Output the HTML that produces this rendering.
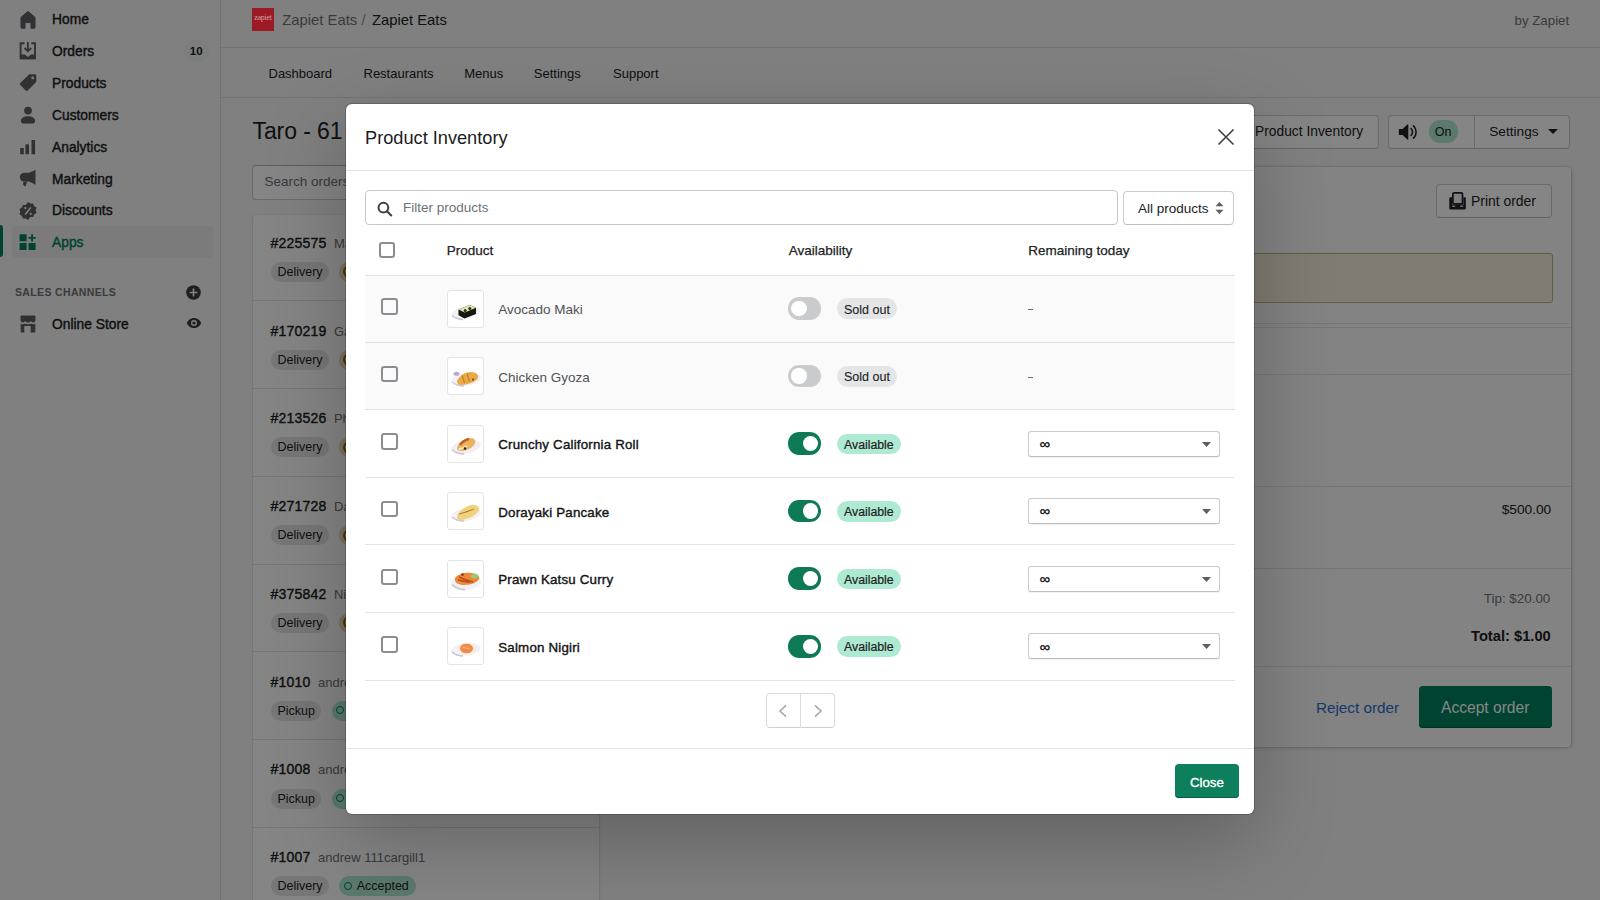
<!DOCTYPE html>
<html><head><meta charset="utf-8">
<style>
html,body{margin:0;padding:0;}
body{width:1600px;height:900px;overflow:hidden;position:relative;font-family:"Liberation Sans",sans-serif;background:#f6f6f7;color:#202223;}
.a{position:absolute;}
.t{position:absolute;white-space:nowrap;line-height:20px;}
.b{font-weight:bold;}
.sb{-webkit-text-stroke:0.3px currentColor;}
.sb2{-webkit-text-stroke:0.4px currentColor;}
svg{position:absolute;overflow:visible;}
</style></head><body>
<!-- SIDEBAR -->
<div class="a" style="left:0;top:0;width:220px;height:900px;background:#f6f6f7;border-right:1px solid #d9dbdd;"></div>
<!-- nav icons -->
<svg style="left:18px;top:9.5px" width="20" height="20" viewBox="0 0 20 20"><path fill="#5c5f62" d="M10 1.2c.3 0 .6.1.8.3l6.2 5.3c.3.3.5.7.5 1.1V17.6c0 .7-.5 1.2-1.2 1.2h-3.2c-.4 0-.6-.3-.6-.6V13.6c0-.4-.3-.7-.7-.7H8.2c-.4 0-.7.3-.7.7v4.6c0 .3-.3.6-.6.6H3.7c-.7 0-1.2-.5-1.2-1.2V7.9c0-.4.2-.8.5-1.1l6.2-5.3c.2-.2.5-.3.8-.3z"/></svg>
<svg style="left:18px;top:41.4px" width="20" height="20" viewBox="0 0 20 20"><path fill="none" stroke="#5c5f62" stroke-width="1.9" d="M6.5 2.3H2.6V17.3H17V2.3H13.3"/><path fill="none" stroke="#5c5f62" stroke-width="1.8" d="M9.9 1v9.2M6.6 7l3.3 3.3L13.2 7"/><path fill="#5c5f62" d="M2.6 13.4h4.3l3 2.6 3-2.6H17v4.9H2.6z"/></svg>
<svg style="left:18px;top:73.2px" width="20" height="20" viewBox="0 0 20 20"><path fill="#5c5f62" d="M11.3 1.3h5.6c.8 0 1.4.6 1.4 1.4v5.6c0 .4-.2.7-.4 1l-8.2 8.2c-.6.6-1.4.6-2 0L2.3 12.1c-.6-.6-.6-1.4 0-2l8.2-8.2c.2-.3.6-.6.8-.6z"/><circle cx="14.7" cy="4.9" r="1.4" fill="#f6f6f7"/></svg>
<svg style="left:18px;top:105px" width="20" height="20" viewBox="0 0 20 20"><circle cx="10" cy="5.6" r="3.9" fill="#5c5f62"/><path fill="#5c5f62" d="M10 11.3c4.3 0 7.1 2 7.1 4.5 0 1.5-.9 2.7-2.2 2.7H5.1c-1.3 0-2.2-1.2-2.2-2.7 0-2.5 2.8-4.5 7.1-4.5z"/></svg>
<svg style="left:18px;top:137px" width="20" height="20" viewBox="0 0 20 20"><rect x="2.2" y="11" width="3.6" height="6.3" rx=".6" fill="#5c5f62"/><rect x="7.4" y="7.2" width="3.6" height="10.1" rx=".6" fill="#5c5f62"/><rect x="13.5" y="3" width="3.6" height="14.3" rx=".6" fill="#5c5f62"/></svg>
<svg style="left:18px;top:168.8px" width="20" height="20" viewBox="0 0 20 20"><path fill="#5c5f62" d="M17.5 1v14.8L11 12.6H6.5C4 12.6 1.8 11 1.8 8.2S4 3.7 6.5 3.7H11z"/><path fill="#5c5f62" d="M5.5 12.4h3.6l-1.2 4.2c-.2.6-1 .8-1.4.3L5 15.4z"/></svg>
<svg style="left:18px;top:200.5px" width="20" height="20" viewBox="0 0 20 20"><path fill="#5c5f62" d="M10 .9l2.3 1.6 2.8-.1 1 2.6 2.4 1.5-.8 2.7.8 2.7-2.4 1.5-1 2.6-2.8-.1L10 19.1l-2.3-1.6-2.8.1-1-2.6-2.4-1.5.8-2.7-.8-2.7 2.4-1.5 1-2.6 2.8.1z"/><path stroke="#f6f6f7" stroke-width="1.5" d="M12.8 6.6L7.2 13.4"/><circle cx="7.3" cy="7.1" r="1.1" fill="#f6f6f7"/><circle cx="12.7" cy="12.9" r="1.1" fill="#f6f6f7"/></svg>
<div class="a" style="left:0;top:224.5px;width:3px;height:32px;background:#008060;border-radius:0 3px 3px 0;"></div>
<div class="a" style="left:12px;top:226px;width:201px;height:32px;background:#ebeced;border-radius:4px;"></div>
<svg style="left:18px;top:232.5px" width="20" height="20" viewBox="0 0 20 20"><rect x="1.6" y="1.3" width="7" height="7" rx=".6" fill="#008060"/><rect x="1.6" y="10" width="7" height="7" rx=".6" fill="#008060"/><rect x="10.6" y="10" width="7" height="7" rx=".6" fill="#008060"/><path stroke="#008060" stroke-width="1.8" d="M14.1 1.2v7.2M10.5 4.8h7.2"/></svg>
<!-- nav texts -->
<div class="t sb2" style="left:52px;top:10px;font-size:13.8px;">Home</div>
<div class="t sb2" style="left:52px;top:42px;font-size:13.8px;">Orders</div>
<div class="t sb2" style="left:52px;top:74px;font-size:13.8px;">Products</div>
<div class="t sb2" style="left:52px;top:106px;font-size:13.8px;">Customers</div>
<div class="t sb2" style="left:52px;top:138px;font-size:13.8px;">Analytics</div>
<div class="t sb2" style="left:52px;top:170px;font-size:13.8px;">Marketing</div>
<div class="t sb2" style="left:52px;top:201px;font-size:13.8px;">Discounts</div>
<div class="t sb2" style="left:52px;top:233px;font-size:13.8px;color:#007f5f;">Apps</div>
<div class="a" style="left:184px;top:40px;width:24.5px;height:22px;border-radius:11px;background:#eeeff0;"></div>
<div class="t b" style="left:184px;top:41px;width:24.5px;text-align:center;font-size:11.5px;">10</div>
<div class="t b" style="left:15px;top:282px;font-size:10.5px;color:#6d7175;letter-spacing:0.35px;">SALES CHANNELS</div>
<svg style="left:186px;top:284.5px" width="15" height="15" viewBox="0 0 15 15"><circle cx="7.5" cy="7.5" r="7.3" fill="#3a3c3e"/><path stroke="#f6f6f7" stroke-width="1.7" d="M7.5 3.6v7.8M3.6 7.5h7.8"/></svg>
<svg style="left:18px;top:314px" width="20" height="20" viewBox="0 0 20 20"><path fill="#5c5f62" d="M3.8 1.5h12.4c.8 0 1.3.5 1.3 1.3V6c0 1.3-1 2.5-2.4 2.5-1 0-1.8-.6-2.2-1.4-.4.8-1.2 1.4-2.2 1.4H9.3c-1 0-1.8-.6-2.2-1.4-.4.8-1.2 1.4-2.2 1.4C3.5 8.5 2.5 7.3 2.5 6V2.8c0-.8.5-1.3 1.3-1.3z"/><path fill="#5c5f62" d="M2.7 9.8c.6.3 1.3.5 2 .5.9 0 1.7-.3 2.3-.8.6.5 1.4.8 2.3.8h1.4c.9 0 1.7-.3 2.3-.8.6.5 1.4.8 2.3.8.7 0 1.4-.2 2-.5v8.8H12.7V12H6.3v6.6H2.7z"/></svg>
<div class="t sb2" style="left:52px;top:315px;font-size:13.8px;">Online Store</div>
<svg style="left:185.5px;top:315px" width="16" height="16" viewBox="0 0 16 16"><path fill="#3a3c3e" d="M8 2.9c3.5 0 6.2 2.5 7.2 5.1-1 2.6-3.7 5.1-7.2 5.1S1.8 10.6.8 8C1.8 5.4 4.5 2.9 8 2.9z"/><circle cx="8" cy="8" r="3" fill="#f6f6f7"/><circle cx="8" cy="8" r="1.6" fill="#3a3c3e"/></svg>

<!-- TOPBAR -->
<div class="a" style="left:221px;top:0;width:1379px;height:47px;background:#f6f6f7;border-bottom:1px solid #dcdee0;"></div>
<div class="a" style="left:221px;top:48px;width:1379px;height:49px;background:#f6f6f7;border-bottom:1px solid #dcdee0;"></div>
<div class="t" style="left:282.3px;top:10px;font-size:14.8px;color:#6d7175;">Zapiet Eats</div>
<div class="t" style="left:361.5px;top:10px;font-size:14.8px;color:#8c9196;">/</div>
<div class="t" style="left:372px;top:10px;font-size:14.8px;color:#202223;">Zapiet Eats</div>
<div class="t" style="left:1514.5px;top:11px;font-size:13.3px;color:#6d7175;">by Zapiet</div>
<div class="t" style="left:268.5px;top:64px;font-size:13px;">Dashboard</div>
<div class="t" style="left:363.5px;top:64px;font-size:13px;">Restaurants</div>
<div class="t" style="left:464.2px;top:64px;font-size:13px;">Menus</div>
<div class="t" style="left:533.8px;top:64px;font-size:13px;">Settings</div>
<div class="t" style="left:613px;top:64px;font-size:13px;">Support</div>

<!-- PAGE -->
<div class="t" style="left:252.5px;top:121px;font-size:23px;letter-spacing:-0.1px;">Taro - 61 Main St</div>
<!-- header buttons -->
<div class="a" style="left:1150px;top:114.5px;width:227px;height:32px;background:#fff;border:1px solid #c9cccf;border-bottom-color:#babfc3;border-radius:4px;"></div>
<div class="t" style="left:1255px;top:122px;font-size:13.8px;">Product Inventory</div>
<div class="a" style="left:1387.5px;top:114.5px;width:180.5px;height:32px;background:#fff;border:1px solid #c9cccf;border-bottom-color:#babfc3;border-radius:4px;"></div>
<div class="a" style="left:1474px;top:115.5px;width:1px;height:32px;background:#c9cccf;"></div>
<svg style="left:1398px;top:121.5px" width="20" height="20" viewBox="0 0 20 20"><path fill="#202223" d="M1.5 7h3.2l4.6-4.6c.4-.4 1-.1 1 .4v14.4c0 .5-.6.8-1 .4L4.7 13H1.5c-.4 0-.7-.3-.7-.7V7.7c0-.4.3-.7.7-.7z"/><path fill="none" stroke="#202223" stroke-width="1.6" stroke-linecap="round" d="M13 6.5c1 .9 1.5 2.1 1.5 3.5s-.5 2.6-1.5 3.5M15.5 3.8c1.7 1.6 2.6 3.8 2.6 6.2s-.9 4.6-2.6 6.2"/></svg>
<div class="a" style="left:1428.5px;top:120px;width:29px;height:22.5px;border-radius:11px;background:#aee9d1;"></div>
<div class="t" style="left:1428.5px;top:121.5px;width:29px;text-align:center;font-size:12.5px;">On</div>
<div class="t" style="left:1489.2px;top:122px;font-size:13.7px;">Settings</div>
<svg style="left:1548px;top:129.4px" width="10" height="5" viewBox="0 0 10 5"><path fill="#202223" d="M0 0h10L5 5z"/></svg>
<!-- search orders -->
<div class="a" style="left:252px;top:164.5px;width:345px;height:33px;background:#fff;border:1px solid #c9cccf;border-top-color:#aeb4b9;border-radius:4px;"></div>
<div class="t" style="left:264.4px;top:172px;font-size:13.5px;color:#6d7175;">Search orders</div>
<!-- list card -->
<div class="a" style="left:252.5px;top:214.5px;width:346.5px;height:700px;background:#fff;box-shadow:0 0 0 1px rgba(63,63,68,.05),0 1px 3px rgba(63,63,68,.15);border-radius:3px;"></div>
<div class="t" style="left:270.5px;top:233.0px;font-size:14px;letter-spacing:0.2px;-webkit-text-stroke:0.4px #202223;">#225575<span style="-webkit-text-stroke:0;letter-spacing:0;color:#6d7175;margin-left:7.5px;font-size:13px;">Maria Silva</span></div>
<div class="a" style="left:271.3px;top:261.7px;width:57.4px;height:20px;border-radius:10px;background:#e4e5e7;"></div>
<div class="t" style="left:271.3px;top:261.7px;width:57.4px;text-align:center;font-size:12.5px;">Delivery</div>
<div class="a" style="left:339.2px;top:261.7px;width:90px;height:20px;border-radius:10px;background:#ead9b0;"></div>
<div class="a" style="left:343.2px;top:265.2px;width:9px;height:9px;border-radius:50%;border:2px solid #916a1a;"></div>
<div class="a" style="left:252px;top:300.2px;width:347px;height:1px;background:#e1e3e5;"></div>
<div class="t" style="left:270.5px;top:321.0px;font-size:14px;letter-spacing:0.2px;-webkit-text-stroke:0.4px #202223;">#170219<span style="-webkit-text-stroke:0;letter-spacing:0;color:#6d7175;margin-left:7.5px;font-size:13px;">Gary Lee</span></div>
<div class="a" style="left:271.3px;top:349.5px;width:57.4px;height:20px;border-radius:10px;background:#e4e5e7;"></div>
<div class="t" style="left:271.3px;top:349.5px;width:57.4px;text-align:center;font-size:12.5px;">Delivery</div>
<div class="a" style="left:339.2px;top:349.5px;width:90px;height:20px;border-radius:10px;background:#ead9b0;"></div>
<div class="a" style="left:343.2px;top:353.0px;width:9px;height:9px;border-radius:50%;border:2px solid #916a1a;"></div>
<div class="a" style="left:252px;top:388.0px;width:347px;height:1px;background:#e1e3e5;"></div>
<div class="t" style="left:270.5px;top:408.0px;font-size:14px;letter-spacing:0.2px;-webkit-text-stroke:0.4px #202223;">#213526<span style="-webkit-text-stroke:0;letter-spacing:0;color:#6d7175;margin-left:7.5px;font-size:13px;">Phil Moss</span></div>
<div class="a" style="left:271.3px;top:437.3px;width:57.4px;height:20px;border-radius:10px;background:#e4e5e7;"></div>
<div class="t" style="left:271.3px;top:437.3px;width:57.4px;text-align:center;font-size:12.5px;">Delivery</div>
<div class="a" style="left:339.2px;top:437.3px;width:90px;height:20px;border-radius:10px;background:#ead9b0;"></div>
<div class="a" style="left:343.2px;top:440.8px;width:9px;height:9px;border-radius:50%;border:2px solid #916a1a;"></div>
<div class="a" style="left:252px;top:475.8px;width:347px;height:1px;background:#e1e3e5;"></div>
<div class="t" style="left:270.5px;top:496.0px;font-size:14px;letter-spacing:0.2px;-webkit-text-stroke:0.4px #202223;">#271728<span style="-webkit-text-stroke:0;letter-spacing:0;color:#6d7175;margin-left:7.5px;font-size:13px;">Dana Fox</span></div>
<div class="a" style="left:271.3px;top:525.1px;width:57.4px;height:20px;border-radius:10px;background:#e4e5e7;"></div>
<div class="t" style="left:271.3px;top:525.1px;width:57.4px;text-align:center;font-size:12.5px;">Delivery</div>
<div class="a" style="left:339.2px;top:525.1px;width:90px;height:20px;border-radius:10px;background:#ead9b0;"></div>
<div class="a" style="left:343.2px;top:528.6px;width:9px;height:9px;border-radius:50%;border:2px solid #916a1a;"></div>
<div class="a" style="left:252px;top:563.6px;width:347px;height:1px;background:#e1e3e5;"></div>
<div class="t" style="left:270.5px;top:584.0px;font-size:14px;letter-spacing:0.2px;-webkit-text-stroke:0.4px #202223;">#375842<span style="-webkit-text-stroke:0;letter-spacing:0;color:#6d7175;margin-left:7.5px;font-size:13px;">Nina Park</span></div>
<div class="a" style="left:271.3px;top:612.9px;width:57.4px;height:20px;border-radius:10px;background:#e4e5e7;"></div>
<div class="t" style="left:271.3px;top:612.9px;width:57.4px;text-align:center;font-size:12.5px;">Delivery</div>
<div class="a" style="left:339.2px;top:612.9px;width:90px;height:20px;border-radius:10px;background:#ead9b0;"></div>
<div class="a" style="left:343.2px;top:616.4px;width:9px;height:9px;border-radius:50%;border:2px solid #916a1a;"></div>
<div class="a" style="left:252px;top:651.4px;width:347px;height:1px;background:#e1e3e5;"></div>
<div class="t" style="left:270.5px;top:672.0px;font-size:14px;letter-spacing:0.2px;-webkit-text-stroke:0.4px #202223;">#1010<span style="-webkit-text-stroke:0;letter-spacing:0;color:#6d7175;margin-left:7.5px;font-size:13px;">andrew 111cargill1</span></div>
<div class="a" style="left:271.3px;top:700.7px;width:49.8px;height:20px;border-radius:10px;background:#e4e5e7;"></div>
<div class="t" style="left:271.3px;top:700.7px;width:49.8px;text-align:center;font-size:12.5px;">Pickup</div>
<div class="a" style="left:331.6px;top:700.7px;width:77px;height:20px;border-radius:10px;background:#aee9d1;"></div>
<div class="a" style="left:335.9px;top:705.9px;width:6px;height:6px;border-radius:50%;border:1.8px solid #007f5f;"></div>
<div class="t" style="left:349.1px;top:700.7px;font-size:12.5px;">Accepted</div>
<div class="a" style="left:252px;top:739.2px;width:347px;height:1px;background:#e1e3e5;"></div>
<div class="t" style="left:270.5px;top:759.0px;font-size:14px;letter-spacing:0.2px;-webkit-text-stroke:0.4px #202223;">#1008<span style="-webkit-text-stroke:0;letter-spacing:0;color:#6d7175;margin-left:7.5px;font-size:13px;">andrew 111cargill1</span></div>
<div class="a" style="left:271.3px;top:788.5px;width:49.8px;height:20px;border-radius:10px;background:#e4e5e7;"></div>
<div class="t" style="left:271.3px;top:788.5px;width:49.8px;text-align:center;font-size:12.5px;">Pickup</div>
<div class="a" style="left:331.6px;top:788.5px;width:77px;height:20px;border-radius:10px;background:#aee9d1;"></div>
<div class="a" style="left:335.9px;top:793.7px;width:6px;height:6px;border-radius:50%;border:1.8px solid #007f5f;"></div>
<div class="t" style="left:349.1px;top:788.5px;font-size:12.5px;">Accepted</div>
<div class="a" style="left:252px;top:827.0px;width:347px;height:1px;background:#e1e3e5;"></div>
<div class="t" style="left:270.5px;top:847.0px;font-size:14px;letter-spacing:0.2px;-webkit-text-stroke:0.4px #202223;">#1007<span style="-webkit-text-stroke:0;letter-spacing:0;color:#6d7175;margin-left:7.5px;font-size:13px;">andrew 111cargill1</span></div>
<div class="a" style="left:271.3px;top:876.3px;width:57.4px;height:20px;border-radius:10px;background:#e4e5e7;"></div>
<div class="t" style="left:271.3px;top:876.3px;width:57.4px;text-align:center;font-size:12.5px;">Delivery</div>
<div class="a" style="left:339.2px;top:876.3px;width:77px;height:20px;border-radius:10px;background:#aee9d1;"></div>
<div class="a" style="left:343.5px;top:881.5px;width:6px;height:6px;border-radius:50%;border:1.8px solid #007f5f;"></div>
<div class="t" style="left:356.7px;top:876.3px;font-size:12.5px;">Accepted</div>

<!-- detail card -->
<div class="a" style="left:615px;top:166.5px;width:955.5px;height:580.5px;background:#fbfbfb;box-shadow:0 0 0 1px rgba(63,63,68,.08),1px 1px 4px rgba(63,63,68,.22);border-radius:4px;"></div>
<div class="a" style="left:1436px;top:183.7px;width:113.7px;height:32.6px;background:#fff;border:1px solid #c9cccf;border-bottom-color:#babfc3;border-radius:4px;"></div>
<svg style="left:1440px;top:185px" width="40" height="30" viewBox="0 0 40 30"><rect x="12.9" y="7.9" width="9.6" height="11" rx="1.2" fill="#f4f4f4" stroke="#202223" stroke-width="1.7"/><path fill="#202223" d="M9.3 13.2c0-.5.4-.9.9-.9H12V19.6h11.4V12.3h1.5c.5 0 .9.4.9.9v10.3c0 .5-.4.9-.9.9H10.2c-.5 0-.9-.4-.9-.9z"/><rect x="12.2" y="20.6" width="3" height="1.3" fill="#e8e8e8"/><rect x="20.2" y="20.6" width="3" height="1.3" fill="#e8e8e8"/></svg>
<div class="t" style="left:1471px;top:191px;font-size:13.9px;">Print order</div>
<div class="a" style="left:630px;top:252.7px;width:920.7px;height:48.7px;background:#f6eedb;border:1px solid #bfb084;border-radius:3px;"></div>
<div class="a" style="left:615px;top:323px;width:953px;height:1px;background:#e1e3e5;"></div>
<div class="a" style="left:615px;top:326.5px;width:955.5px;height:1px;background:#e1e3e5;"></div>
<div class="a" style="left:615px;top:373.5px;width:955.5px;height:1px;background:#e1e3e5;"></div>
<div class="a" style="left:615px;top:486px;width:955.5px;height:1px;background:#e1e3e5;"></div>
<div class="t" style="left:1501.7px;top:500px;font-size:13.7px;">$500.00</div>
<div class="a" style="left:615px;top:568px;width:955.5px;height:1px;background:#e1e3e5;"></div>
<div class="t" style="left:1483.8px;top:589px;font-size:13.4px;color:#6d7175;">Tip: $20.00</div>
<div class="t b" style="left:1471px;top:626px;font-size:14.7px;">Total: $1.00</div>
<div class="a" style="left:615px;top:666px;width:955.5px;height:1px;background:#e1e3e5;"></div>
<div class="t" style="left:1315.9px;top:698px;font-size:15.3px;color:#2c6ecb;">Reject order</div>
<div class="a" style="left:1418.6px;top:686.1px;width:133.4px;height:42.2px;background:#008060;border-radius:4px;box-shadow:inset 0 -1px 0 #005e46;"></div>
<div class="t" style="left:1441px;top:698px;font-size:15.6px;color:#fff;">Accept order</div>

<!-- OVERLAY -->
<div class="a" style="left:0;top:0;width:1600px;height:900px;background:rgba(0,0,0,0.48);"></div>
<div class="a" style="left:252px;top:8px;width:22px;height:23px;background:#9b1a24;"></div>
<div class="t" style="left:252px;top:8px;width:22px;text-align:center;font-size:8px;letter-spacing:-0.3px;color:#d9a0a5;font-family:'Liberation Serif',serif;">zapiet</div>
<!-- MODAL -->
<div class="a" style="left:346px;top:104px;width:908px;height:710px;background:#fff;border-radius:6px;box-shadow:0 0 0 1px rgba(0,0,0,.18),0 26px 80px rgba(0,0,0,.25);"></div>
<svg width="0" height="0" style="position:absolute"><defs><filter id="bl" x="-10%" y="-10%" width="120%" height="120%"><feGaussianBlur stdDeviation="0.35"/></filter></defs></svg>
<div class="t" style="left:365px;top:128.4px;font-size:18.2px;color:#1a1c1d;">Product Inventory</div>
<svg style="left:1216px;top:127px" width="20" height="20" viewBox="0 0 20 20"><path stroke="#3d3f41" stroke-width="1.6" d="M2.5 2.5l15 15M17.5 2.5l-15 15"/></svg>
<div class="a" style="left:346px;top:170px;width:908px;height:1px;background:#e1e3e5;"></div>
<div class="a" style="left:365px;top:190px;width:750.5px;height:33px;background:#fff;border:1px solid #c4c7ca;border-radius:4px;"></div>
<svg style="left:376px;top:199.5px" width="18" height="18" viewBox="0 0 18 18"><circle cx="7.4" cy="7.6" r="4.9" fill="none" stroke="#3f4245" stroke-width="2"/><path stroke="#3f4245" stroke-width="2.1" stroke-linecap="round" d="M11 11.3l4.2 4.1"/></svg>
<div class="t" style="left:403px;top:198px;font-size:13.5px;color:#6d7175;">Filter products</div>
<div class="a" style="left:1122.7px;top:190.5px;width:109.7px;height:32.2px;background:#fff;border:1px solid #c9cccf;border-bottom-color:#babfc3;border-radius:4px;"></div>
<div class="t" style="left:1138px;top:199px;font-size:13.5px;">All products</div>
<svg style="left:1214.5px;top:202px" width="9" height="12" viewBox="0 0 9 12"><path fill="#5c5f62" d="M4.5 0L8.5 4.2H.5zM4.5 12L.5 7.8h8z"/></svg>
<div style="position:absolute;box-sizing:border-box;width:16.5px;height:16.5px;border:2px solid #8a8e93;border-radius:3px;left:378.8px;top:241.6px;"></div>
<div class="t" style="left:446.7px;top:241px;font-size:13.5px;-webkit-text-stroke:0.25px #202223;">Product</div>
<div class="t" style="left:788.7px;top:241px;font-size:13.5px;-webkit-text-stroke:0.25px #202223;">Availability</div>
<div class="t" style="left:1028.3px;top:241px;font-size:13.5px;-webkit-text-stroke:0.25px #202223;">Remaining today</div>
<div class="a" style="left:365px;top:274.5px;width:870px;height:1px;background:#e1e3e5;"></div>
<div class="a" style="left:365px;top:275.5px;width:870px;height:66.3px;background:#fafafa;"></div>
<div class="a" style="left:365px;top:341.8px;width:870px;height:1px;background:#e1e3e5;"></div>
<div style="position:absolute;box-sizing:border-box;width:16.5px;height:16.5px;border:2px solid #8a8e93;border-radius:3px;left:381px;top:298.3px;"></div>
<div class="a" style="left:446.5px;top:289.5px;width:35.5px;height:36px;background:#fff;border:1px solid #e3e4e6;border-radius:3px;"></div>
<svg style="left:446.5px;top:289.5px" width="37.5" height="38" viewBox="0 0 37.5 38"><g filter="url(#bl)"><ellipse cx="19" cy="22.5" rx="14.5" ry="6.2" fill="#f1f0f4" transform="rotate(-10 19 22.5)"/><path d="M5 25.5c3 2.5 7 4 11 4" stroke="#c8c6d6" stroke-width="1.6" fill="none"/><path d="M11.5 19.5l11-4.5 6.5 2.8v6.2L17.5 28.5l-6-3.2z" fill="#121410"/><path d="M11.5 19.5l11-4.5 6.5 2.8-11.2 4.7z" fill="#e4e6b4"/><circle cx="18.2" cy="20.4" r="1.5" fill="#2b3315"/><circle cx="22.8" cy="18.4" r="1.5" fill="#2b3315"/></g></svg>
<div class="t" style="left:498.3px;top:300px;font-size:13.5px;color:#505356;">Avocado Maki</div>
<div class="a" style="left:788.3px;top:297.2px;width:33px;height:22.6px;border-radius:11.3px;background:#c9cbcd;"></div>
<div class="a" style="left:791.4px;top:300.8px;width:15.4px;height:15.4px;border-radius:50%;background:#fff;"></div>
<div class="a" style="left:836.6px;top:298.4px;width:60.5px;height:20.8px;border-radius:10.4px;background:#e4e5e7;"></div>
<div class="t" style="left:844px;top:300px;font-size:12.5px;-webkit-text-stroke:0.1px #202223;">Sold out</div>
<div class="a" style="left:1028.3px;top:309.2px;width:4.8px;height:1.3px;background:#6d7175;"></div>
<div class="a" style="left:365px;top:343.1px;width:870px;height:66.3px;background:#fafafa;"></div>
<div class="a" style="left:365px;top:409.4px;width:870px;height:1px;background:#e1e3e5;"></div>
<div style="position:absolute;box-sizing:border-box;width:16.5px;height:16.5px;border:2px solid #8a8e93;border-radius:3px;left:381px;top:365.9px;"></div>
<div class="a" style="left:446.5px;top:357.1px;width:35.5px;height:36px;background:#fff;border:1px solid #e3e4e6;border-radius:3px;"></div>
<svg style="left:446.5px;top:357.1px" width="37.5" height="38" viewBox="0 0 37.5 38"><g filter="url(#bl)"><ellipse cx="19" cy="22.5" rx="15" ry="6.5" fill="#f3f1f5" transform="rotate(-8 19 22.5)"/><path d="M5 25c3 2.5 8 4 12 4" stroke="#cfcbd9" stroke-width="1.5" fill="none"/><ellipse cx="9.5" cy="16.8" rx="3" ry="2" fill="#b9a8cf"/><path d="M10 24c2-5 8-9 14-9 5 0 8 3 7 6-2 4-11 7-17 7-3 0-4-2-4-4z" fill="#e7aa45"/><path d="M15 18l2.5 8M20 16.5l2.5 8" stroke="#c27d22" stroke-width="1.1"/><circle cx="26" cy="22.5" r="1" fill="#6b3a12"/></g></svg>
<div class="t" style="left:498.3px;top:368px;font-size:13.5px;color:#505356;">Chicken Gyoza</div>
<div class="a" style="left:788.3px;top:364.8px;width:33px;height:22.6px;border-radius:11.3px;background:#c9cbcd;"></div>
<div class="a" style="left:791.4px;top:368.4px;width:15.4px;height:15.4px;border-radius:50%;background:#fff;"></div>
<div class="a" style="left:836.6px;top:365.9px;width:60.5px;height:20.8px;border-radius:10.4px;background:#e4e5e7;"></div>
<div class="t" style="left:844px;top:367px;font-size:12.5px;-webkit-text-stroke:0.1px #202223;">Sold out</div>
<div class="a" style="left:1028.3px;top:376.8px;width:4.8px;height:1.3px;background:#6d7175;"></div>
<div class="a" style="left:365px;top:476.9px;width:870px;height:1px;background:#e1e3e5;"></div>
<div style="position:absolute;box-sizing:border-box;width:16.5px;height:16.5px;border:2px solid #8a8e93;border-radius:3px;left:381px;top:433.4px;"></div>
<div class="a" style="left:446.5px;top:424.6px;width:35.5px;height:36px;background:#fff;border:1px solid #e3e4e6;border-radius:3px;"></div>
<svg style="left:446.5px;top:424.6px" width="37.5" height="38" viewBox="0 0 37.5 38"><g filter="url(#bl)"><ellipse cx="19" cy="22" rx="15" ry="6.8" fill="#f1eef5" transform="rotate(-12 19 22)"/><path d="M5 24.5c3 2.5 8 4.5 12 4.5" stroke="#c9c3d8" stroke-width="1.6" fill="none"/><path d="M10 23c1-5 6-9 12-10 4-.5 7 1 6 5-1 4-7 7-12 8-4 .5-6-1-6-3z" fill="#eab25e"/><path d="M13 20c2-3 5-5 9-6" stroke="#c4621c" stroke-width="2.4"/><path d="M12 24c3 0 5-1 8-3" stroke="#f4ecc8" stroke-width="2"/><circle cx="18" cy="23.5" r="1.3" fill="#2a1a0a"/></g></svg>
<div class="t" style="left:498.3px;top:435px;font-size:13.3px;letter-spacing:0.2px;-webkit-text-stroke:0.4px #141516;color:#141516;">Crunchy California Roll</div>
<div class="a" style="left:788.3px;top:432.3px;width:33px;height:22.6px;border-radius:11.3px;background:#0e7a55;"></div>
<div class="a" style="left:802.6px;top:435.9px;width:15.4px;height:15.4px;border-radius:50%;background:#fff;"></div>
<div class="a" style="left:836.6px;top:433.5px;width:64.2px;height:20.8px;border-radius:10.4px;background:#aee9d1;"></div>
<div class="t" style="left:844px;top:435px;font-size:12.3px;-webkit-text-stroke:0.2px #202223;">Available</div>
<div class="a" style="left:1028.4px;top:430.5px;width:189.2px;height:24.2px;background:#fff;border:1px solid #c9cccf;border-bottom-color:#babfc3;border-radius:3px;box-shadow:0 1px 0 rgba(0,0,0,.05);"></div>
<div class="t b" style="left:1039.5px;top:433.8px;font-size:15px;">&#8734;</div>
<svg style="left:1202.3px;top:441.7px" width="9" height="5" viewBox="0 0 9 5"><path fill="#5c5f62" d="M0 0h9L4.5 5z"/></svg>
<div class="a" style="left:365px;top:544.4px;width:870px;height:1px;background:#e1e3e5;"></div>
<div style="position:absolute;box-sizing:border-box;width:16.5px;height:16.5px;border:2px solid #8a8e93;border-radius:3px;left:381px;top:500.9px;"></div>
<div class="a" style="left:446.5px;top:492.1px;width:35.5px;height:36px;background:#fff;border:1px solid #e3e4e6;border-radius:3px;"></div>
<svg style="left:446.5px;top:492.1px" width="37.5" height="38" viewBox="0 0 37.5 38"><g filter="url(#bl)"><ellipse cx="19" cy="22.5" rx="15" ry="6.5" fill="#f2eff5" transform="rotate(-10 19 22.5)"/><path d="M5 25c3 2.5 8 4 12 4" stroke="#cdc8da" stroke-width="1.5" fill="none"/><path d="M10 25c1-5 7-10 14-12 5-1 9 2 8 5-1 4-10 9-17 10-3 .5-5-1-5-3z" fill="#f1d27c"/><path d="M12 22c5-1 10-3 15-5" stroke="#b98a3c" stroke-width="1.3"/></g></svg>
<div class="t" style="left:498.3px;top:503px;font-size:13.3px;letter-spacing:0.2px;-webkit-text-stroke:0.4px #141516;color:#141516;">Dorayaki Pancake</div>
<div class="a" style="left:788.3px;top:499.8px;width:33px;height:22.6px;border-radius:11.3px;background:#0e7a55;"></div>
<div class="a" style="left:802.6px;top:503.4px;width:15.4px;height:15.4px;border-radius:50%;background:#fff;"></div>
<div class="a" style="left:836.6px;top:501.0px;width:64.2px;height:20.8px;border-radius:10.4px;background:#aee9d1;"></div>
<div class="t" style="left:844px;top:502px;font-size:12.3px;-webkit-text-stroke:0.2px #202223;">Available</div>
<div class="a" style="left:1028.4px;top:498.0px;width:189.2px;height:24.2px;background:#fff;border:1px solid #c9cccf;border-bottom-color:#babfc3;border-radius:3px;box-shadow:0 1px 0 rgba(0,0,0,.05);"></div>
<div class="t b" style="left:1039.5px;top:501.3px;font-size:15px;">&#8734;</div>
<svg style="left:1202.3px;top:509.2px" width="9" height="5" viewBox="0 0 9 5"><path fill="#5c5f62" d="M0 0h9L4.5 5z"/></svg>
<div class="a" style="left:365px;top:612.0px;width:870px;height:1px;background:#e1e3e5;"></div>
<div style="position:absolute;box-sizing:border-box;width:16.5px;height:16.5px;border:2px solid #8a8e93;border-radius:3px;left:381px;top:568.5px;"></div>
<div class="a" style="left:446.5px;top:559.7px;width:35.5px;height:36px;background:#fff;border:1px solid #e3e4e6;border-radius:3px;"></div>
<svg style="left:446.5px;top:559.7px" width="37.5" height="38" viewBox="0 0 37.5 38"><g filter="url(#bl)"><ellipse cx="19" cy="22.5" rx="15" ry="7.5" fill="#f1f1f3" transform="rotate(-6 19 22.5)"/><path d="M5 24.5c3 3 8 5 13 5" stroke="#cfcfd8" stroke-width="1.8" fill="none"/><path d="M8 18c3-4 10-6 17-5 5 1 8 3 7 6-1 3-8 6-15 6-5 0-10-2-9-7z" fill="#e9893a"/><path d="M12 17c4 2 9 4 14 5M11 20c4 1 8 2 12 2" stroke="#c24d14" stroke-width="1.4"/><ellipse cx="27.5" cy="16" rx="3.5" ry="2.5" fill="#9cc878"/><circle cx="15.5" cy="14.5" r="1.3" fill="#8a2a12"/></g></svg>
<div class="t" style="left:498.3px;top:570px;font-size:13.3px;letter-spacing:0.2px;-webkit-text-stroke:0.4px #141516;color:#141516;">Prawn Katsu Curry</div>
<div class="a" style="left:788.3px;top:567.4px;width:33px;height:22.6px;border-radius:11.3px;background:#0e7a55;"></div>
<div class="a" style="left:802.6px;top:571.0px;width:15.4px;height:15.4px;border-radius:50%;background:#fff;"></div>
<div class="a" style="left:836.6px;top:568.6px;width:64.2px;height:20.8px;border-radius:10.4px;background:#aee9d1;"></div>
<div class="t" style="left:844px;top:570px;font-size:12.3px;-webkit-text-stroke:0.2px #202223;">Available</div>
<div class="a" style="left:1028.4px;top:565.6px;width:189.2px;height:24.2px;background:#fff;border:1px solid #c9cccf;border-bottom-color:#babfc3;border-radius:3px;box-shadow:0 1px 0 rgba(0,0,0,.05);"></div>
<div class="t b" style="left:1039.5px;top:568.9px;font-size:15px;">&#8734;</div>
<svg style="left:1202.3px;top:576.8px" width="9" height="5" viewBox="0 0 9 5"><path fill="#5c5f62" d="M0 0h9L4.5 5z"/></svg>
<div class="a" style="left:365px;top:679.6px;width:870px;height:1px;background:#e1e3e5;"></div>
<div style="position:absolute;box-sizing:border-box;width:16.5px;height:16.5px;border:2px solid #8a8e93;border-radius:3px;left:381px;top:636.1px;"></div>
<div class="a" style="left:446.5px;top:627.2px;width:35.5px;height:36px;background:#fff;border:1px solid #e3e4e6;border-radius:3px;"></div>
<svg style="left:446.5px;top:627.2px" width="37.5" height="38" viewBox="0 0 37.5 38"><g filter="url(#bl)"><ellipse cx="19" cy="22.5" rx="15" ry="6.5" fill="#f3f1f5" transform="rotate(-8 19 22.5)"/><path d="M5 25c3 2.5 7 4 11 4" stroke="#c6c4d2" stroke-width="1.6" fill="none"/><ellipse cx="20" cy="21.5" rx="9" ry="5.5" fill="#f6ead8"/><ellipse cx="19.5" cy="21.5" rx="6.5" ry="4.8" fill="#f08a4a"/><path d="M15 20l8 2" stroke="#f7b58a" stroke-width="1"/></g></svg>
<div class="t" style="left:498.3px;top:638px;font-size:13.3px;letter-spacing:0.2px;-webkit-text-stroke:0.4px #141516;color:#141516;">Salmon Nigiri</div>
<div class="a" style="left:788.3px;top:635.0px;width:33px;height:22.6px;border-radius:11.3px;background:#0e7a55;"></div>
<div class="a" style="left:802.6px;top:638.6px;width:15.4px;height:15.4px;border-radius:50%;background:#fff;"></div>
<div class="a" style="left:836.6px;top:636.2px;width:64.2px;height:20.8px;border-radius:10.4px;background:#aee9d1;"></div>
<div class="t" style="left:844px;top:637px;font-size:12.3px;-webkit-text-stroke:0.2px #202223;">Available</div>
<div class="a" style="left:1028.4px;top:633.2px;width:189.2px;height:24.2px;background:#fff;border:1px solid #c9cccf;border-bottom-color:#babfc3;border-radius:3px;box-shadow:0 1px 0 rgba(0,0,0,.05);"></div>
<div class="t b" style="left:1039.5px;top:636.5px;font-size:15px;">&#8734;</div>
<svg style="left:1202.3px;top:644.4px" width="9" height="5" viewBox="0 0 9 5"><path fill="#5c5f62" d="M0 0h9L4.5 5z"/></svg>
<div class="a" style="left:765.9px;top:693.3px;width:67px;height:32.6px;background:#fff;border:1px solid #d9dbdd;border-bottom-color:#cfd2d5;border-radius:4px;"></div>
<div class="a" style="left:800px;top:693.3px;width:1px;height:34.6px;background:#d9dbdd;"></div>
<svg style="left:776px;top:703px" width="14" height="16" viewBox="0 0 14 16"><path fill="none" stroke="#a2a6aa" stroke-width="1.5" d="M10 2.4L4 8l6 5.6"/></svg>
<svg style="left:811px;top:703px" width="14" height="16" viewBox="0 0 14 16"><path fill="none" stroke="#a2a6aa" stroke-width="1.5" d="M4 2.4L10 8l-6 5.6"/></svg>
<div class="a" style="left:346px;top:747.5px;width:908px;height:1px;background:#e1e3e5;"></div>
<div class="a" style="left:1175.2px;top:764.2px;width:63.6px;height:34.3px;background:#0d7f5d;border-radius:4px;box-shadow:inset 0 -1px 0 #006046;"></div>
<div class="t" style="left:1190px;top:773px;font-size:13.2px;-webkit-text-stroke:0.35px #fff;color:#fff;">Close</div>

</body></html>
